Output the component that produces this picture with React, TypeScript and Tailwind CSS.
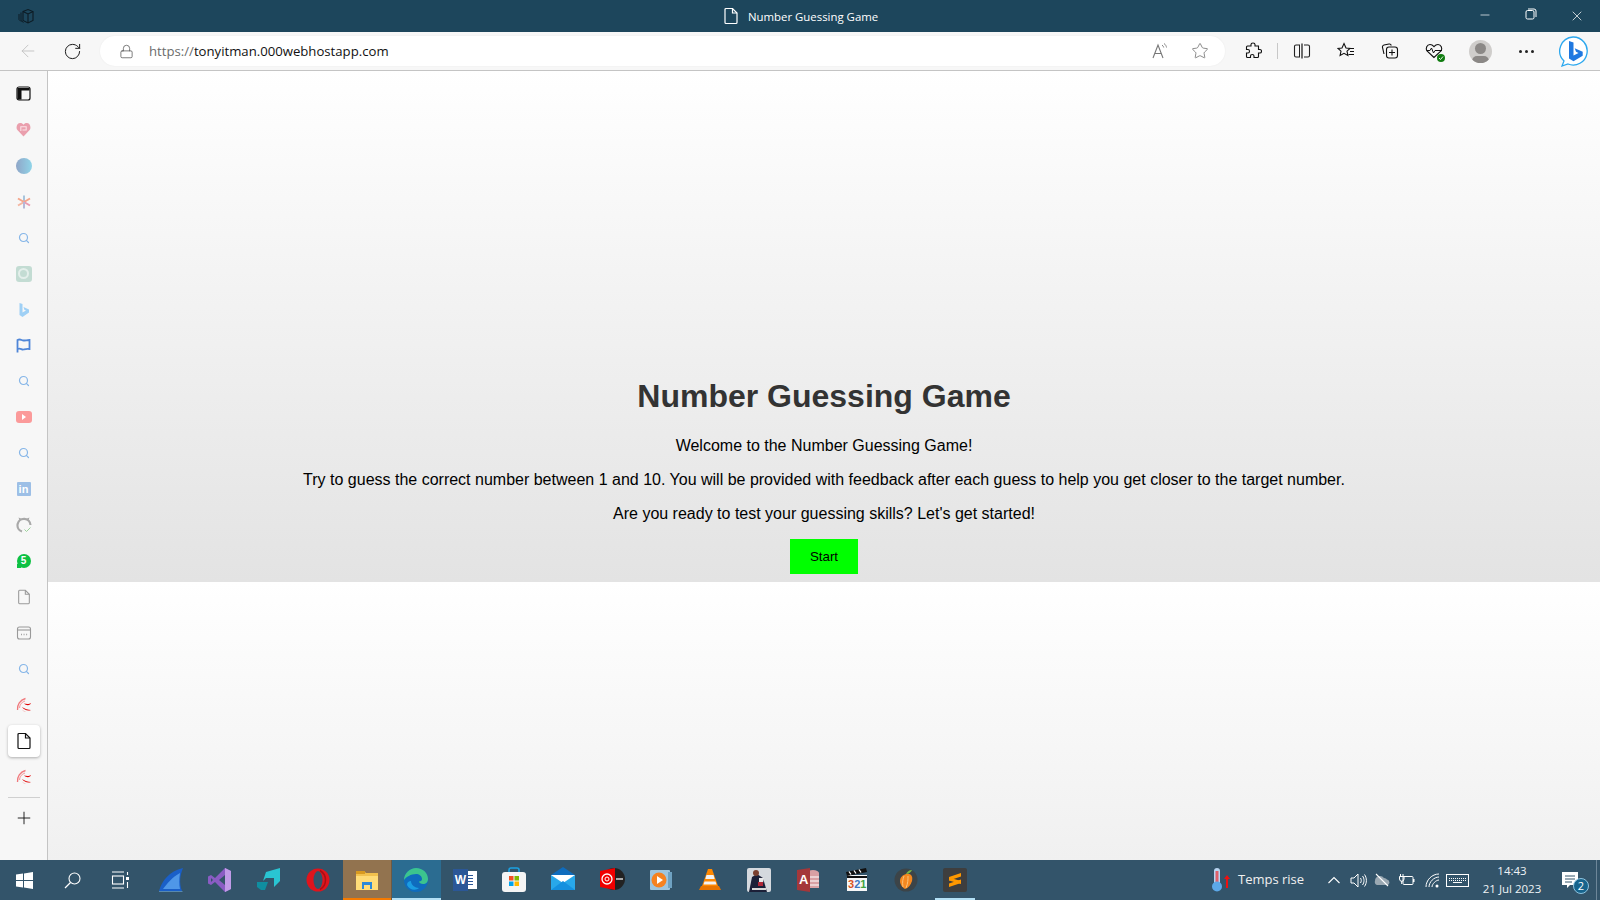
import type { ReactNode } from "react";
import { ArrowLeft, Lock, Minus, Plus, RotateCw, Search, Star, X } from "lucide-react";

const UI_FONT = "font-['Open_Sans','Noto_Sans',sans-serif]";
const LOGO_FONT = "font-['Liberation_Sans',sans-serif]";

function Svg({ size = 20, vb = 24, children, className = "" }: { size?: number; vb?: number; children: ReactNode; className?: string }) {
  return (
    <svg width={size} height={size} viewBox={`0 0 ${vb} ${vb}`} fill="none" className={className}>
      {children}
    </svg>
  );
}

function DocIcon({ color = "#222", size = 18 }: { color?: string; size?: number }) {
  return (
    <Svg size={size} vb={18}>
      <path d="M4 1.500h6.500L15 6v9.500a1 1 0 0 1-1 1H4a1 1 0 0 1-1-1v-13a1 1 0 0 1 1-1Z" stroke={color} strokeWidth="1.200" />
      <path d="M10.500 1.500V6H15" stroke={color} strokeWidth="1.200" />
    </Svg>
  );
}

function Swirl() {
  return (
    <Svg size={16} vb={16}>
      <path d="M1.500 13C1 8 4 3 9.500 1.500" stroke="#f0787c" strokeWidth="1.300" />
      <path d="M3.500 11C3.500 8 6 5 9 4" stroke="#f4a0a0" strokeWidth="1.200" />
      <path d="M8 6.500c2 .5 5 1 7-.5-.5 2.500-4.500 3-7 .5Z" fill="#e00000" />
      <path d="M6 10c2 3 6 4.500 9 3-3-.2-6-1-9-3Z" fill="#e00000" />
      <path d="M6 12.500c1 1.500 2.500 2.500 4 2.500-1.500-.5-3-1.500-4-2.500Z" fill="#f06060" />
    </Svg>
  );
}

function SmallSearch() {
  return <Search size={12} strokeWidth={2.400} color="#86b6e8" />;
}

const sidebarIcons: ReactNode[] = [
  <Svg size={15} vb={15} key="tabs">
    <rect x="1" y="1" width="13" height="13" rx="2" stroke="#111" strokeWidth="1.200" />
    <path d="M1.500 2h12v2.500H5.500v9h-3a1 1 0 0 1-1-1Z" fill="#111" />
  </Svg>,
  <Svg size={15} vb={14} key="heart">
    <path d="M7 13.500 1.300 7.500C-.5 5 1 1 4 1c1.300 0 2.300.6 3 1.500C7.700 1.600 8.700 1 10 1c3 0 4.500 4 2.700 6.500Z" fill="#ea9fad" />
    <path d="M4 4.500h5.500v3H6M4.500 4.500v4" stroke="#fbe4e8" strokeWidth="1" />
  </Svg>,
  <div key="circle" className="w-4 h-4 rounded-full bg-gradient-to-r from-[#8fa6c8] to-[#8fd4e8]" />,
  <Svg size={14} vb={14} key="asterisk">
    <path d="M7 7V0.500" stroke="#a8c4dc" strokeWidth="2" />
    <path d="M7 7 1 3.500" stroke="#f4a58a" strokeWidth="2" />
    <path d="M7 7 13 3.500" stroke="#f4a58a" strokeWidth="2" />
    <path d="M7 7 1 10.500" stroke="#f4b5a0" strokeWidth="2" />
    <path d="M7 7 13 10.500" stroke="#e89ab0" strokeWidth="2" />
    <path d="M7 7V13.500" stroke="#b4b8d8" strokeWidth="2" />
  </Svg>,
  <SmallSearch key="s1" />,
  <div key="gpt" className="w-4 h-4 rounded-[3px] bg-[#c3dcd3] flex items-center justify-center">
    <div className="w-[11px] h-[11px] rounded-full border-2 border-[#e4efeb]" />
  </div>,
  <Svg size={16} vb={16} key="bing">
    <path d="M3.500 1l3 1v8.500l3.500-2-1.700-.8L7.500 5l5.500 2.500v3L6.500 15l-3-2Z" fill="#9fd0f5" />
  </Svg>,
  <Svg size={15} vb={15} key="flag">
    <path d="M1.500 14.500V2c3-1.500 4 .5 6 .5s3.500-.5 6-.5v9c-2.500-.5-4 0-6 .5s-3-2-6-.5" stroke="#4f86d8" strokeWidth="1.800" />
  </Svg>,
  <SmallSearch key="s2" />,
  <div key="yt" className="w-4 h-[12px] rounded-[3px] bg-[#fb9a9a] flex items-center justify-center">
    <div className="w-0 h-0 border-y-[3px] border-y-transparent border-l-[4px] border-l-white" />
  </div>,
  <SmallSearch key="s3" />,
  <div key="li" className={`w-[14px] h-[14px] rounded-[1px] bg-[#9dbfe6] flex items-center justify-center text-white text-[11px] leading-none font-bold ${LOGO_FONT}`}>
    in
  </div>,
  <Svg size={16} vb={16} key="gh">
    <path d="M6 14.500A6.500 6.500 0 1 1 14.500 8" stroke="#a9a9a9" strokeWidth="2.200" />
    <path d="M4 3 3.500 1.500 6 2.500M12 3l.5-1.500L10 2.500" stroke="#a9a9a9" strokeWidth="1.200" />
    <path d="M8.500 12.500l2 2 4-4" stroke="#9bd29b" strokeWidth="1" />
  </Svg>,
  <div key="five" className="relative w-[14px] h-[14px] rounded-full bg-[#0dc143] flex items-center justify-center">
    <span className={`text-white text-[10px] leading-none font-bold ${LOGO_FONT}`}>5</span>
    <div className="absolute left-0 bottom-0 w-[4px] h-[4px] bg-[#0dc143]" />
  </div>,
  <DocIcon key="doc" color="#9a9a9a" size={16} />,
  <Svg size={16} vb={16} key="cal">
    <rect x="1.500" y="2" width="13" height="12" rx="2" stroke="#9a9a9a" strokeWidth="1.100" />
    <path d="M1.500 5h13" stroke="#9a9a9a" strokeWidth="1.100" />
    <path d="M5 9.500h.9M7.600 9.500h.9M10.200 9.500h.9" stroke="#9a9a9a" strokeWidth="1.300" />
  </Svg>,
  <SmallSearch key="s4" />,
  <Swirl key="sw1" />,
  <DocIcon key="active" color="#111" />,
  <Swirl key="sw2" />,
];

function Sidebar() {
  return (
    <aside className="w-[48px] shrink-0 bg-[#f7f7f7] border-r border-[#c4c4c4] flex flex-col items-center pt-[5px]">
      {sidebarIcons.map((icon, i) => (
        <div key={i} className="h-[35.950px] w-full flex items-center justify-center">
          {i === 18 ? (
            <div className="w-[32px] h-[32px] bg-white rounded-[4px] shadow-[0_1px_3px_rgba(0,0,0,0.3)] flex items-center justify-center">{icon}</div>
          ) : (
            icon
          )}
        </div>
      ))}
      <div className="w-[32px] h-px bg-[#d0d0d0] mt-[2px]" />
      <div className="h-[40px] flex items-center justify-center">
        <Plus size={20} strokeWidth={1.100} color="#111" />
      </div>
    </aside>
  );
}

function TitleBar() {
  return (
    <div className={`h-[32px] bg-[#1d465c] flex items-center relative ${UI_FONT}`}>
      <div className="w-[52px] flex justify-center">
        <Svg size={18} vb={18}>
          <path d="M6 4.500 11 2.500l5 2v9l-5 2.500-5-2.500Z" stroke="#0d1b24" strokeWidth="1.100" />
          <path d="M11 7v9M6 4.500 11 7l5-2.500" stroke="#0d1b24" strokeWidth="1.100" />
          <path d="M4 5.500v8l2.500 2M2 7v5.500l2 2" stroke="#0d1b24" strokeWidth="1" />
        </Svg>
      </div>
      <div className="absolute left-[722px] top-0 h-full flex items-center gap-[8px] text-white text-[11.400px]">
        <DocIcon color="#fff" size={18} />
        <span className="pt-[1px]">Number Guessing Game</span>
      </div>
      <div className="ml-auto flex text-white">
        <div className="w-[46px] flex justify-center"><Minus size={14} strokeWidth={1.200} /></div>
        <div className="w-[46px] flex justify-center">
          <Svg size={12} vb={12}>
            <rect x="1" y="2.500" width="8" height="8.500" rx="1.500" stroke="#fff" />
            <path d="M3 1h6a2 2 0 0 1 2 2v6" stroke="#fff" />
          </Svg>
        </div>
        <div className="w-[46px] flex justify-center"><X size={16} strokeWidth={1.100} /></div>
      </div>
    </div>
  );
}

function ToolbarSlot({ w, children }: { w: string; children: ReactNode }) {
  return <div className={`${w} h-full flex items-center justify-center shrink-0`}>{children}</div>;
}

function BingLogo() {
  return (
    <Svg size={32} vb={32}>
      <path d="M16 2a14 14 0 1 1-5 27l-6 2 2-5A14 14 0 0 1 16 2Z" fill="#fff" stroke="#2ba7ee" strokeWidth="1.300" />
      <path d="M12 6l4.500 1.500v13l5-2.500-2.500-1.300-1.300-3.500 8 3.500v4l-9.200 5.500L12 23.500Z" fill="#1f78e0" />
    </Svg>
  );
}

function Toolbar() {
  return (
    <div className={`h-[38px] bg-[#f7f7f7] border-b border-[#c4c4c4] box-content flex items-center ${UI_FONT}`}>
      <ToolbarSlot w="w-[56px]"><ArrowLeft size={20} strokeWidth={1} color="#bdbdbd" /></ToolbarSlot>
      <ToolbarSlot w="w-[32px]"><RotateCw size={19} strokeWidth={1.200} color="#111" /></ToolbarSlot>
      <div className="ml-[12px] w-[1125px] h-[30px] bg-white rounded-full flex items-center shadow-[0_0_2px_rgba(0,0,0,0.06)] shrink-0">
        <div className="w-[49px] flex justify-center pl-[3px]"><Lock size={15} strokeWidth={1.100} color="#444" /></div>
        <span className="text-[13.160px] leading-none text-[#111] pt-[1px]"><span className="text-[#6b6b6b]">https://</span>tonyitman.000webhostapp.com</span>
        <div className="ml-auto flex items-center">
          <div className="w-[40px] flex justify-center">
            <Svg size={18} vb={18}>
              <path d="M2 16 7 3l5 13M3.800 11.500h6.500" stroke="#777" strokeWidth="1.100" />
              <path d="M11 3c1 .7 1.500 1.500 1.700 2.500M13 1.500c1.500 1 2.300 2.500 2.500 4" stroke="#888" strokeWidth="1" />
            </Svg>
          </div>
          <div className="w-[40px] flex justify-center mr-[5px]"><Star size={18} strokeWidth={1} color="#666" /></div>
        </div>
      </div>
      <div className="w-[6px] shrink-0" />
      <ToolbarSlot w="w-[44px]">
        <Svg size={18} vb={18}>
          <path d="M7 2.500c0-2 4-2 4 0V4h3.500v3.500H16c2 0 2 3.500 0 3.500h-1.500v3.500a1 1 0 0 1-1 1H10V14c0-2-3.500-2-3.500 0v1.500H3.500a1 1 0 0 1-1-1V11H4c2 0 2-3.500 0-3.500H2.500V5a1 1 0 0 1 1-1H7Z" stroke="#111" strokeWidth="1.100" />
        </Svg>
      </ToolbarSlot>
      <div className="w-[4px] flex justify-center"><div className="w-px h-[16px] bg-[#c8c8c8]" /></div>
      <ToolbarSlot w="w-[45px]">
        <Svg size={18} vb={18}>
          <path d="M7 3H3a1.500 1.500 0 0 0-1.500 1.500v9A1.500 1.500 0 0 0 3 15h4M11 3h4a1.500 1.500 0 0 1 1.500 1.500v9A1.500 1.500 0 0 1 15 15h-4" stroke="#222" strokeWidth="1.100" />
          <path d="M9 1.500v15" stroke="#222" strokeWidth="1.300" />
          <path d="M6 3h1v12H6z" fill="#222" />
        </Svg>
      </ToolbarSlot>
      <ToolbarSlot w="w-[44px]">
        <Svg size={18} vb={18}>
          <path d="M7 1.500 9 6l4 .4-3 2.800.9 4.300L7 11.300 3.100 13.500 4 9.200 1 6.400 5 6Z" stroke="#111" strokeWidth="1.100" />
          <path d="M12 6.500h5M13 9.500h4M11.500 12.500h5.500" stroke="#111" strokeWidth="1.100" />
        </Svg>
      </ToolbarSlot>
      <ToolbarSlot w="w-[44px]">
        <Svg size={18} vb={18}>
          <path d="M3 12 1.500 5.500A2 2 0 0 1 3 3l5-1c1-.2 2 .4 2.300 1.500" stroke="#111" strokeWidth="1.100" />
          <rect x="5.500" y="5" width="11" height="11" rx="2.500" stroke="#111" strokeWidth="1.100" />
          <path d="M11 7.500v6M8 10.500h6" stroke="#111" strokeWidth="1.100" />
        </Svg>
      </ToolbarSlot>
      <ToolbarSlot w="w-[44px]">
        <div className="relative w-[18px] h-[18px]">
          <Svg size={18} vb={18}>
            <path d="M9 15.500 2 9C.2 6.500 2 2.500 5 2.500c1.700 0 3 1 4 2.200 1-1.200 2.300-2.200 4-2.200 3 0 4.800 4 3 6.500L9 15.500Z" stroke="#111" strokeWidth="1.100" />
            <path d="M1.500 8.500h3.500l1.500-2.500 2 5 1.500-2.500h7" stroke="#111" strokeWidth="1" />
          </Svg>
          <div className="absolute right-[-2px] bottom-[-2px] w-[8px] h-[8px] rounded-full bg-[#107c10] flex items-center justify-center">
            <Svg size={6} vb={6}><path d="M1 3l1.500 1.500L5 1.500" stroke="#fff" strokeWidth="0.900" /></Svg>
          </div>
        </div>
      </ToolbarSlot>
      <ToolbarSlot w="w-[48px]">
        <div className="w-[23px] h-[23px] rounded-full bg-[#cfcdcb] overflow-hidden flex flex-col items-center">
          <div className="w-[11px] h-[11px] rounded-full bg-[#8b8886] mt-[3px] shrink-0" />
          <div className="w-[17px] h-[10px] rounded-full bg-[#8b8886] mt-[2px] shrink-0" />
        </div>
      </ToolbarSlot>
      <ToolbarSlot w="w-[44px]">
        <div className="flex gap-[3px]">
          <div className="w-[3px] h-[3px] rounded-full bg-[#222]" />
          <div className="w-[3px] h-[3px] rounded-full bg-[#222]" />
          <div className="w-[3px] h-[3px] rounded-full bg-[#222]" />
        </div>
      </ToolbarSlot>
      <ToolbarSlot w="w-[50px]"><BingLogo /></ToolbarSlot>
    </div>
  );
}

const taskIcons: ReactNode[] = [
  <Svg size={24} vb={24} key="shark">
    <path d="M0 23C3 13 10 3 24 0c-3 7-4 15-1 23Z" fill="#1a5fc8" />
    <path d="M4 21C8 16 13 9 21 5c-1 6-1 12 0 16Z" fill="#4f97e8" />
    <path d="M0 23h23l1 .5H0Z" fill="#7fbdf2" />
  </Svg>,
  <Svg size={24} vb={24} key="vs">
    <path d="M17 0l6 3v18l-6 3L7 14l-4 3-3-1.500V8.500L3 7l4 3Z" fill="#8a5cc4" />
    <path d="M17 0l6 3v18l-6 3Z" fill="#c19be8" />
    <path d="M17 7v10l-6-5Z" fill="#33546a" />
    <path d="M3 10v4l2-2Z" fill="#33546a" />
  </Svg>,
  <Svg size={24} vb={24} key="teal">
    <path d="M9 4 23 0v13l-6 6v-9H9l-3 3Z" fill="#29c5d3" />
    <path d="M0 14h11l-3 8H4l-4-3Z" fill="#0f8ea0" />
  </Svg>,
  <Svg size={24} vb={24} key="opera">
    <ellipse cx="12" cy="12" rx="11.500" ry="11.500" fill="#e0141c" />
    <ellipse cx="12" cy="12" rx="4.500" ry="9" fill="#33546a" />
    <path d="M14 2.500c3.500 2 5.500 5.500 5.500 9.500s-2 7.500-5.500 9.500" stroke="#a80f14" strokeWidth="1.500" />
  </Svg>,
  <Svg size={24} vb={24} key="folder">
    <path d="M1 3h8l2 2h12v17H1Z" fill="#f2c14e" />
    <path d="M1 3h9v3H1Z" fill="#d99a20" />
    <path d="M1 8h22v14H1Z" fill="#ffdc78" />
    <path d="M7 14h10v7h-2v-4H9v4H7Z" fill="#2b88d8" />
  </Svg>,
  <Svg size={24} vb={24} key="edge">
    <circle cx="12" cy="12" r="12" fill="#0f6cbd" />
    <path d="M0 12C0 5 6 0 12 0c7 0 12 5 12 11 0 3-2 5-5 5-2 0-4-1-4-2.500 2 0 3-1 3-2.500 0-3-3-5-6-5-5 0-10 3-12 6Z" fill="#3cc48e" />
    <path d="M7 13c0 4 4 7 8 7-3 3-10 2-12-3 0-3 2-4 4-4Z" fill="#1b9de2" />
  </Svg>,
  <div key="word" className="relative w-[24px] h-[24px]">
    <div className="absolute left-[10px] top-[3px] w-[14px] h-[18px] bg-white flex flex-col justify-center gap-[2px] px-[4px]">
      <div className="h-px bg-[#2b5797]" />
      <div className="h-px bg-[#2b5797]" />
      <div className="h-px bg-[#2b5797]" />
      <div className="h-px bg-[#2b5797]" />
    </div>
    <div className={`absolute left-0 top-[1px] w-[15px] h-[22px] bg-[#2b5797] flex items-center justify-center text-white text-[12px] font-bold leading-none ${LOGO_FONT}`}>W</div>
  </div>,
  <Svg size={26} vb={26} key="store">
    <path d="M8 6V3a2 2 0 0 1 2-2h6a2 2 0 0 1 2 2v3" stroke="#1ba1e2" strokeWidth="1.600" />
    <rect x="1" y="5" width="24" height="20" rx="3" fill="#f5f5f5" />
    <rect x="8" y="9" width="4.500" height="4.500" fill="#f25022" />
    <rect x="13.500" y="9" width="4.500" height="4.500" fill="#7fba00" />
    <rect x="8" y="14.500" width="4.500" height="4.500" fill="#00a4ef" />
    <rect x="13.500" y="14.500" width="4.500" height="4.500" fill="#ffb900" />
  </Svg>,
  <Svg size={26} vb={26} key="mail">
    <path d="M1 8 13 0l12 8Z" fill="#0f6cbd" />
    <rect x="1" y="8" width="24" height="15" fill="#28a8ea" />
    <path d="M1 8h24L13 16Z" fill="#fff" />
    <path d="M1 23 13 14l12 9Z" fill="#1490df" />
  </Svg>,
  <Svg size={26} vb={26} key="groove">
    <circle cx="15" cy="12" r="11" fill="#222" />
    <rect x="17" y="11" width="7" height="2" fill="#aaa" />
    <path d="M1 4 16 1v22L1 20Z" fill="#f00000" />
    <circle cx="8" cy="12" r="5" stroke="#fff" strokeWidth="1.300" />
    <circle cx="8" cy="12" r="2" stroke="#fff" strokeWidth="1" />
  </Svg>,
  <Svg size={24} vb={24} key="wmp">
    <rect x="1" y="2" width="20" height="20" rx="1" fill="#9ec5de" />
    <rect x="19" y="4" width="4" height="16" fill="#6fa2c2" />
    <circle cx="10" cy="12" r="7.500" fill="#f58220" />
    <path d="M8 8l6 4-6 4Z" fill="#fff" />
  </Svg>,
  <Svg size={24} vb={24} key="vlc">
    <path d="M10 1h4l6 17H4Z" fill="#ff8800" />
    <path d="M8.500 7h7l1.200 4H7.300ZM6.500 13.500h11l1 3h-13Z" fill="#f3f3f3" />
    <path d="M3 18h18l2 4H1Z" fill="#e87400" />
  </Svg>,
  <Svg size={24} vb={24} key="fifa">
    <rect x="0" y="0" width="24" height="24" rx="2" fill="#d5d9de" />
    <path d="M2 24 5 9l5-3 6 4 4 14Z" fill="#1c2038" />
    <circle cx="9" cy="5" r="3" fill="#7a4030" />
    <path d="M12 10h5l-1 5h-4Z" fill="#e8e8e8" />
    <path d="M11 14h5v4h-5Z" fill="#b02838" />
    <path d="M5 20h14v2H5Z" fill="#d8d8d8" />
  </Svg>,
  <div key="access" className="relative w-[24px] h-[24px]">
    <Svg size={24} vb={24}>
      <ellipse cx="17" cy="5" rx="6" ry="3" fill="#d9a0a4" />
      <rect x="11" y="5" width="12" height="15" fill="#d9a0a4" />
      <path d="M12 9h11M12 13h11M12 17h11" stroke="#fff" strokeWidth="1.200" />
      <path d="M1 2 14 0v24L1 22Z" fill="#a4373a" />
    </Svg>
    <span className={`absolute left-[3px] top-[5px] text-white text-[13px] font-bold leading-none ${LOGO_FONT}`}>A</span>
  </div>,
  <div key="mpc" className="relative w-[24px] h-[24px]">
    <Svg size={24} vb={24}>
      <rect x="2" y="7" width="20" height="16" fill="#f7f7f7" />
      <path d="M1 4 21 0l1 4L2 8Z" fill="#111" />
      <path d="M4 3.500l2 3M9 2.500l2 3M14 1.500l2 3" stroke="#fff" strokeWidth="1.300" />
      <rect x="2" y="8" width="20" height="2" fill="#111" />
    </Svg>
    <div className={`absolute left-[3px] top-[10px] w-[18px] flex justify-between text-[11px] font-bold leading-[12px] ${LOGO_FONT}`}>
      <span className="text-[#d9541e]">3</span>
      <span className="text-[#3b78c4]">2</span>
      <span className="text-[#3ea33e]">1</span>
    </div>
  </div>,
  <Svg size={24} vb={24} key="fl">
    <circle cx="12" cy="12" r="11.500" fill="#3c4448" />
    <path d="M12 6c5-1 7 2 6 7-1 4-4 7-7 8-2-1-5-4-5-8s3-6 6-7Z" fill="#f5881f" />
    <path d="M10 8c-1 3-2 6-1 11M14 8c0 4 0 7-2 12" stroke="#fbc27a" strokeWidth="1" />
    <path d="M12 6c1-2 3-4 6-4-1 2-3 4-6 4Z" fill="#7ab648" />
  </Svg>,
  <div key="sublime" className="w-[24px] h-[24px] rounded-[2px] bg-[#3e3e3e] flex items-center justify-center">
    <Svg size={16} vb={16}>
      <path d="M2 5 14 1v3.500L2 8.500Z" fill="#ff9800" />
      <path d="M2 5.500 14 9v3L2 8.500Z" fill="#ff9800" />
      <path d="M2 11.500 14 7.500V11L2 15Z" fill="#ff9800" />
    </Svg>
  </div>,
];

function TaskButton({ icon, index }: { icon: ReactNode; index: number }) {
  const tone =
    index === 4
      ? "bg-[#92734f] border-r border-r-[#6e5a44]"
      : index === 5
        ? "bg-[#2b6c91]"
        : "";
  return (
    <div className={`relative w-[49px] h-full flex items-center justify-center shrink-0 ${tone}`}>
      {icon}
      {index === 4 && <div className="absolute left-0 right-0 bottom-0 h-[2px] bg-[#f57a00]" />}
      {index === 5 && <div className="absolute left-0 right-0 bottom-0 h-[2px] bg-[#b3e0f5]" />}
      {index === 16 && <div className="absolute left-[4px] w-[40px] bottom-0 h-[2px] bg-[#b3e0f5]" />}
    </div>
  );
}

function Taskbar() {
  return (
    <div className={`h-[40px] bg-[#33546a] flex items-center text-white shrink-0 ${UI_FONT}`}>
      <div className="w-[48px] flex justify-center">
        <Svg size={17} vb={17}>
          <path d="M0 2.500 7 1.500V8H0ZM8 1.400 17 0v8H8ZM0 9h7v6.500L0 14.500ZM8 9h9v8l-9-1.400Z" fill="#fff" />
        </Svg>
      </div>
      <div className="w-[48px] flex justify-center">
        <Svg size={17} vb={17}>
          <circle cx="10.500" cy="6.500" r="5.500" stroke="#fff" strokeWidth="1.100" />
          <path d="M6.500 10.500 1 16" stroke="#fff" strokeWidth="1.300" />
        </Svg>
      </div>
      <div className="w-[48px] mr-[2.500px] flex justify-center">
        <Svg size={18} vb={18}>
          <path d="M1 1h12M1 17h12" stroke="#fff" strokeWidth="1.200" />
          <rect x="1.500" y="5" width="11" height="8" stroke="#fff" strokeWidth="1.100" />
          <rect x="15" y="6" width="3" height="3" fill="#fff" />
          <path d="M16.500 1v3M16.500 11v6" stroke="#fff" strokeWidth="1.100" />
        </Svg>
      </div>
      <div className="flex h-full">
        {taskIcons.map((icon, i) => (
          <TaskButton key={i} icon={icon} index={i} />
        ))}
      </div>

      <div className="ml-auto flex items-center h-full">
        <div className="w-[32px] flex justify-center">
          <Svg size={26} vb={26}>
            <rect x="5" y="1" width="6" height="17" rx="3" fill="#b8d4f0" />
            <rect x="6.500" y="4" width="3" height="12" fill="#e0606a" />
            <circle cx="8" cy="19.500" r="5" fill="#5ca8e8" />
            <path d="M18 9v12" stroke="#f01010" strokeWidth="2" />
            <path d="M15 12l3-4 3 4Z" fill="#f01010" />
          </Svg>
        </div>
        <span className="text-[13px] text-[#f0f0f0] w-[84px]">Temps rise</span>
        <div className="w-[24px] flex justify-center">
          <Svg size={14} vb={14}>
            <path d="M1.500 10 7 4.500l5.500 5.500" stroke="#fff" strokeWidth="1.100" />
          </Svg>
        </div>
        <div className="w-[24px] flex justify-center">
          <Svg size={17} vb={17}>
            <path d="M1 6h3l4-4v13l-4-4H1Z" stroke="#fff" />
            <path d="M10.500 6c1 1.500 1 3.500 0 5M12.500 4c2 2.500 2 6.500 0 9M14.500 2.500c2.500 3.500 2.500 8.500 0 12" stroke="#fff" />
          </Svg>
        </div>
        <div className="w-[24px] flex justify-center">
          <Svg size={16} vb={16}>
            <path d="M1 9a5 5 0 0 1 9-3 3.500 3.500 0 0 1 3 1.500A3 3 0 0 1 14 13H3a3 3 0 0 1-2-4Z" fill="#9aa8b2" />
            <path d="M2 2l12 12" stroke="#fff" strokeWidth="1.100" />
          </Svg>
        </div>
        <div className="w-[25px] flex justify-center">
          <Svg size={17} vb={17}>
            <rect x="5" y="4.500" width="10" height="8" rx="1" stroke="#fff" />
            <path d="M15 7v3h1.500V7Z" fill="#fff" />
            <path d="M2.500 2v2.500M5 2v2.500M1.500 4.500h4.500v2.500a2.200 2.200 0 0 1-4.500 0ZM3.700 9v3" stroke="#fff" />
          </Svg>
        </div>
        <div className="w-[25px] flex justify-center">
          <Svg size={16} vb={16}>
            <path d="M2 15C2 8 8 2 15 2M5 15c0-5 5-10 10-10M8 15c0-3 4-7 7-7" stroke="#fff" strokeWidth="1" />
            <circle cx="13" cy="14" r="1.500" fill="#fff" />
          </Svg>
        </div>
        <div className="w-[27px] flex justify-center">
          <div className="w-[23px] h-[13px] border border-white flex flex-col justify-center gap-[1px] px-[2px]">
            <div className="h-[1px] border-t border-dotted border-white" />
            <div className="h-[1px] border-t border-dotted border-white" />
            <div className="h-[1px] border-t border-white mx-[4px]" />
          </div>
        </div>
        <div className="w-[80px] flex flex-col items-center text-[11.500px] leading-[18px] text-[#eef2f5] ml-[1px]">
          <span>14:43</span>
          <span>21 Jul 2023</span>
        </div>
        <div className="w-[36px] flex justify-center relative">
          <Svg size={18} vb={18}>
            <path d="M1 1h16v13H9l-3 3v-3H1Z" fill="#fff" />
            <path d="M4 5h10M4 8h10M4 11h7" stroke="#33546a" />
          </Svg>
          <div className="absolute right-[-1px] top-[7px] w-[16px] h-[16px] rounded-full bg-[#17648d] border border-[#8fc4e0] text-[11px] leading-[14px] text-center">2</div>
        </div>
        <div className="w-[4px] h-full border-l border-[#6d8699] ml-[8px]" />
      </div>
    </div>
  );
}

export default function App() {
  return (
    <div className="w-[1600px] h-[900px] flex flex-col overflow-hidden bg-white">
      <TitleBar />
      <Toolbar />
      <div className="flex-1 flex min-h-0">
        <Sidebar />
        <main className="flex-1 flex flex-col font-['Liberation_Sans',Arial,sans-serif] text-black">
          <section className="h-[511px] bg-gradient-to-b from-white to-[#e3e3e3] flex flex-col items-center justify-end pb-[8px]">
            <h1 className="text-[32px] font-bold text-[#333] leading-[37px] mb-[22px]">Number Guessing Game</h1>
            <p className="text-[16px] leading-[18px] mb-[16px]">Welcome to the Number Guessing Game!</p>
            <p className="text-[16px] leading-[18px] mb-[16px]">Try to guess the correct number between 1 and 10. You will be provided with feedback after each guess to help you get closer to the target number.</p>
            <p className="text-[16px] leading-[18px] mb-[16px]">Are you ready to test your guessing skills? Let's get started!</p>
            <button type="button" className="w-[68px] h-[35px] bg-[#00ff00] text-[13.330px] text-black">Start</button>
          </section>
          <section className="flex-1 bg-gradient-to-b from-white to-[#f0f0f0]" />
        </main>
      </div>
      <Taskbar />
    </div>
  );
}
